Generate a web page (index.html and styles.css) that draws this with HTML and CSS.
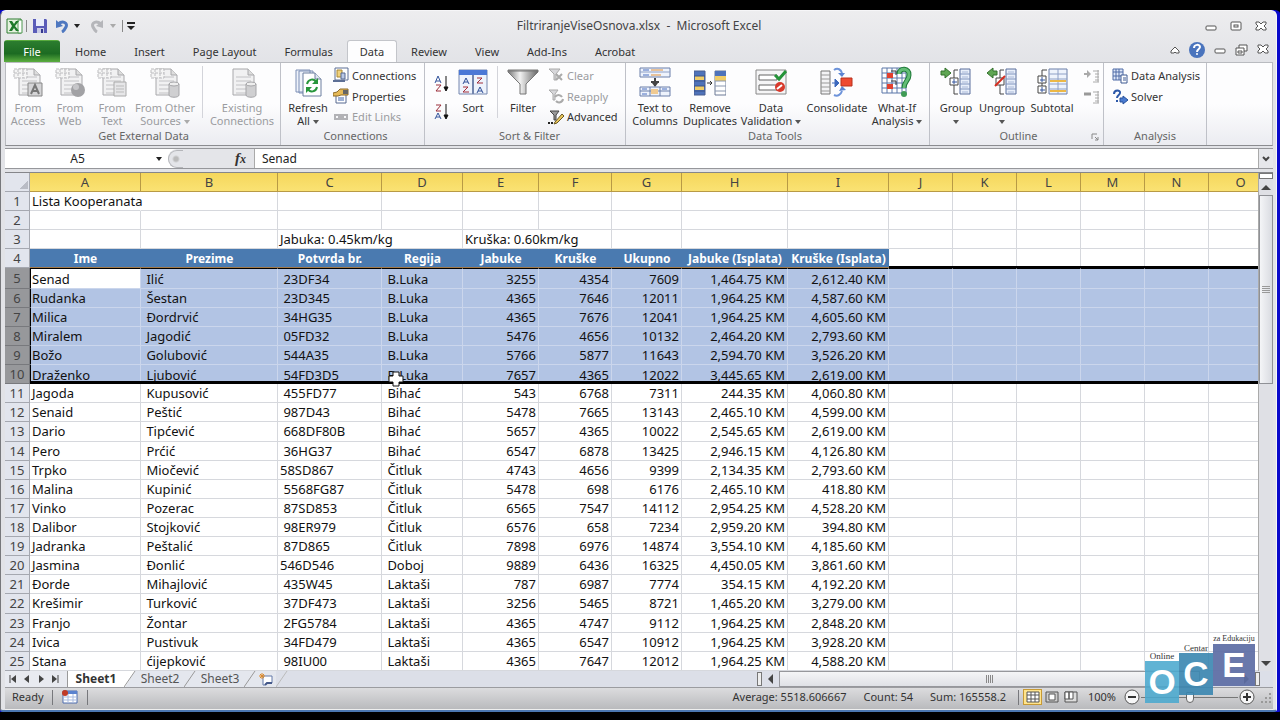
FILE: index.html
```html
<!DOCTYPE html>
<html lang="bs">
<head>
<meta charset="utf-8">
<title>FiltriranjeViseOsnova.xlsx - Microsoft Excel</title>
<link rel="stylesheet" href="styles.css">
</head>
<body>
<svg class="defs" aria-hidden="true">
  <defs>
    <linearGradient id="metal" x1="0" x2="1"><stop offset="0" stop-color="#777"/><stop offset=".4" stop-color="#f2f2f2"/><stop offset="1" stop-color="#666"/></linearGradient>
    <symbol id="sheet-gray" viewBox="0 0 32 32">
      <path d="M7 3h15l6 6v20H7z" fill="#f1f1f2" stroke="#a8a8ab"/><path d="M22 3v6h6" fill="#ddd" stroke="#a8a8ab"/>
      <path d="M10 11h15M10 15h15M10 19h15M10 23h15M10 27h15" stroke="#c2c2c5"/>
    </symbol>
    <symbol id="range-gray" viewBox="0 0 32 32"><path d="M2 3h13v9H2zM2 7h13M6 3v9M11 3v9" fill="#f5f5f5" stroke="#bcbcbf" stroke-dasharray="3 1"/></symbol>
    <symbol id="drum-gray" viewBox="0 0 32 32"><path d="M20 18v11c0 3 10 3 10 0V18" fill="#cfcfd1" stroke="#a5a5a8"/><ellipse cx="25" cy="18" rx="5" ry="2" fill="#eee" stroke="#a5a5a8"/></symbol>
    <symbol id="levels" viewBox="0 0 32 32"><path d="M20 3h10v25H20z" fill="#e9effa" stroke="#5b6f9c"/><path d="M20 8h10M20 13h10M20 18h10M20 23h10" stroke="#7f93bd"/><path d="M22 6h6M22 11h6M22 16h6M22 21h6M22 26h6" stroke="#a9b8d8"/></symbol>
  </defs>
</svg>

<div class="window">
  <header class="titlebar">
    <div class="quick">
      <svg width="18" height="18" viewBox="0 0 18 18"><path d="M2 2h14v14H2z" fill="#e5f2df" stroke="#2f7d32"/><path d="M13 3h4v13h-4z" fill="#fff" stroke="#4f9850"/><path d="M4 4h3l2 3 2-3h3l-4 5 4 5h-3l-2-3-2 3H4l3-5z" fill="#1f7a2b"/></svg>
      <i class="tick"></i>
      <button class="plain save" aria-label="Save"><svg width="16" height="16" viewBox="0 0 16 16"><path d="M1 1h13l1 1v13H1z" fill="#5a5cb8"/><path d="M4 1h8v7H4z" fill="#e9edfb"/><path d="M5 10h7v5H5z" fill="#c9cbe6"/><path d="M9 11h2v4H9z" fill="#34378d"/></svg></button>
      <button class="plain undo" aria-label="Undo"><svg width="14" height="14" viewBox="0 0 14 14"><path d="M3 5c5-4 10-1 8 3-1 2-2 4-4 5" fill="none" stroke="#4f78c0" stroke-width="3"/><path d="M1 1v8l7-2z" fill="#4f78c0"/></svg></button>
      <i class="caret"></i>
      <button class="plain redo" aria-label="Redo"><svg width="14" height="14" viewBox="0 0 14 14"><path d="M11 5C6 1 1 4 3 8c1 2 2 4 4 5" fill="none" stroke="#b5b6ba" stroke-width="3"/><path d="M13 1v8L6 7z" fill="#b5b6ba"/></svg></button>
      <i class="caret dim"></i>
      <i class="tick"></i>
      <svg width="8" height="8" viewBox="0 0 8 8"><path d="M0 1h8" stroke="#222" stroke-width="2"/><path d="M0 4h8L4 8z" fill="#222"/></svg>
    </div>
    <h1>FiltriranjeViseOsnova.xlsx &nbsp;- &nbsp;Microsoft Excel</h1>
    <div class="sysbtns">
      <button class="plain" aria-label="Minimize"><svg width="12" height="12" viewBox="0 0 12 12"><rect x="1" y="6" width="10" height="4" rx="1" fill="#fff" stroke="#555"/></svg></button>
      <button class="plain" aria-label="Maximize"><svg width="12" height="12" viewBox="0 0 12 12"><rect x="1" y="2" width="10" height="8" rx="1" fill="#fff" stroke="#555"/><rect x="4" y="5" width="4" height="2" fill="#fff" stroke="#555"/></svg></button>
      <button class="plain" aria-label="Close"><svg width="12" height="12" viewBox="0 0 12 12"><path d="M1 2h3l2 2 2-2h3v2L9 6l2 2v2H8L6 8l-2 2H1V8l2-2-2-2z" fill="#fff" stroke="#555"/></svg></button>
    </div>
  </header>

  <nav class="tabs">
    <button class="tab file">File</button>
    <button class="tab">Home</button>
    <button class="tab">Insert</button>
    <button class="tab">Page Layout</button>
    <button class="tab">Formulas</button>
    <button class="tab active">Data</button>
    <button class="tab">Review</button>
    <button class="tab">View</button>
    <button class="tab">Add-Ins</button>
    <button class="tab">Acrobat</button>
    <div class="bookbtns">
      <button class="plain" aria-label="Collapse ribbon"><svg width="10" height="8" viewBox="0 0 10 8"><path d="M1 5l4-4 4 4v2H6L5 6 4 7H1z" fill="#fff" stroke="#555"/></svg></button>
      <button class="plain" aria-label="Help"><svg width="16" height="16" viewBox="0 0 16 16"><circle cx="8" cy="8" r="8" fill="#4a74bd"/><path d="M5 6c0-4 6-4 6-1 0 2-3 2-3 5" fill="none" stroke="#fff" stroke-width="2"/><circle cx="8" cy="12" r="1" fill="#fff"/></svg></button>
      <button class="plain" aria-label="Minimize workbook"><svg width="12" height="12" viewBox="0 0 12 12"><rect x="1" y="5" width="10" height="4" rx="1" fill="#fff" stroke="#555"/></svg></button>
      <button class="plain" aria-label="Restore workbook"><svg width="13" height="12" viewBox="0 0 13 12"><path d="M4 1h8v6H4z" fill="#fff" stroke="#555"/><path d="M1 4h8v7H1z" fill="#fff" stroke="#555"/><path d="M3 7h4v2H3z" fill="#fff" stroke="#555"/></svg></button>
      <button class="plain" aria-label="Close workbook"><svg width="12" height="12" viewBox="0 0 12 12"><path d="M1 1h3l2 2 2-2h3v2L9 5l2 2v2H8L6 7 4 9H1V7l2-2-2-2z" fill="#fff" stroke="#555"/></svg></button>
    </div>
  </nav>

  <section class="ribbon">
    <div class="group g-external">
      <div class="tools">
        <button class="big w42 off"><svg width="32" height="32"><use href="#sheet-gray"/><use href="#range-gray"/><path d="M16 17h14v13H16z" fill="#d4d4d6" stroke="#888"/><path d="M19 28l4-9 4 9M20 25h6" fill="none" stroke="#777" stroke-width="2"/></svg>From<br>Access</button>
        <button class="big w42 off"><svg width="32" height="32"><use href="#sheet-gray"/><use href="#range-gray"/><circle cx="24" cy="24" r="7" fill="#a2a2a5"/><circle cx="22" cy="21" r="3" fill="#c6c6c9"/></svg>From<br>Web</button>
        <button class="big w42 off"><svg width="32" height="32"><use href="#sheet-gray"/><use href="#range-gray"/><path d="M18 16h12v14H18z" fill="#e6e6e8" stroke="#aaa"/><path d="M20 20h8M20 23h8M20 26h8" stroke="#bbb"/></svg>From<br>Text</button>
        <button class="big w64 off"><svg width="32" height="32"><use href="#sheet-gray"/><use href="#range-gray"/><use href="#drum-gray"/></svg>From Other<br>Sources <i class="caret dim"></i></button>
        <i class="rule"></i>
        <button class="big w70 off"><svg width="32" height="32"><use href="#sheet-gray"/><use href="#drum-gray"/></svg>Existing<br>Connections</button>
      </div>
      <div class="caption">Get External Data</div>
    </div>

    <div class="group g-connections">
      <div class="tools">
        <button class="big w42"><svg width="32" height="32" viewBox="0 0 32 32"><path d="M4 4h14v22H4zM7 5h14v22H7z" fill="#eef2fa" stroke="#7d8fb5"/><path d="M11 7h12l6 6v17H11z" fill="#fff" stroke="#6d7f9f"/><path d="M23 7v6h6" fill="#dfe5f0" stroke="#6d7f9f"/><path d="M15 18c1-5 7-6 9-2" stroke="#27963b" stroke-width="2" fill="none"/><path d="M26 12v6h-6z" fill="#27963b"/><path d="M25 21c-1 5-7 6-9 2" stroke="#27963b" stroke-width="2" fill="none"/><path d="M14 27v-6h6z" fill="#27963b"/></svg>Refresh<br>All <i class="caret soft"></i></button>
        <div class="stack">
          <button class="small"><svg width="16" height="16" viewBox="0 0 16 16"><path d="M2 1h13v12H2z" fill="#fff" stroke="#5d6f95"/><path d="M4 3h5v7H4z" fill="#f1d27c" stroke="#a98835"/><path d="M8 6h4v6H8z" fill="#b9c8e6" stroke="#56698f"/><path d="M0 14h12" stroke="#5d6f95" stroke-width="2"/></svg>Connections</button>
          <button class="small"><svg width="16" height="16" viewBox="0 0 16 16"><path d="M3 6h10v9H3z" fill="#fff" stroke="#56698f"/><path d="M5 10h6M5 12h6" stroke="#3e62a8"/><path d="M4 4l3-3h8v6H8L5 8H0V5z" fill="#e6b956" stroke="#8c6b2b"/><path d="M10 2h5v4h-5z" fill="#666"/></svg>Properties</button>
          <button class="small off"><svg width="16" height="16" viewBox="0 0 16 16"><path d="M2 6h5v4H2zM9 6h5v4H9zM5 8h6" fill="none" stroke="#b2b2b6" stroke-width="2"/></svg>Edit Links</button>
        </div>
      </div>
      <div class="caption">Connections</div>
    </div>

    <div class="group g-sort">
      <div class="tools">
        <div class="stack az">
          <button class="small" aria-label="Sort A to Z"><svg width="16" height="18" viewBox="0 0 16 18"><path d="M1 8l3-7 3 7M2 6h4" fill="none" stroke="#34559c"/><path d="M2 10h5l-5 6h5" fill="none" stroke="#9b2f3a"/><path d="M12 1v14M10 12l2 4 2-4z" fill="#111" stroke="#111"/></svg></button>
          <button class="small" aria-label="Sort Z to A"><svg width="16" height="18" viewBox="0 0 16 18"><path d="M2 2h5L2 8h5" fill="none" stroke="#9b2f3a"/><path d="M1 16l3-6 3 6M2 14h4" fill="none" stroke="#34559c"/><path d="M12 1v14M10 12l2 4 2-4z" fill="#111" stroke="#111"/></svg></button>
        </div>
        <button class="big w38"><svg width="32" height="32" viewBox="0 0 32 32"><path d="M2 4h28v24H2z" fill="#eef3fc" stroke="#7486ae"/><path d="M2 4h28v5H2z" fill="#4b78d6"/><path d="M16 9v19" stroke="#7486ae" stroke-width="2"/><path d="M6 18l3-6 3 6M7 16h4M20 27l3-6 3 6M21 25h4" fill="none" stroke="#2f4e96"/><path d="M6 21h5l-5 5h6M20 12h5l-5 5h6" fill="none" stroke="#a22f3b"/></svg>Sort</button>
        <i class="rule"></i>
        <button class="big w42"><svg width="32" height="32" viewBox="0 0 32 32"><path d="M1 4h30v2L19 18v10h-6V18L1 6z" fill="url(#metal)" stroke="#777"/><path d="M2 5h28" stroke="#777"/></svg>Filter</button>
        <div class="stack">
          <button class="small off"><svg width="16" height="16" viewBox="0 0 16 16"><path d="M1 2h11L8 7v6H6V7z" fill="#d7d7da" stroke="#aaa"/><path d="M8 7l6 6M14 7l-6 6" stroke="#aaa" stroke-width="2"/></svg>Clear</button>
          <button class="small off"><svg width="16" height="16" viewBox="0 0 16 16"><path d="M1 2h9L7 6v6H5V6z" fill="#d7d7da" stroke="#aaa"/><path d="M7 9a4 4 0 0 1 7 0M15 11a4 4 0 0 1-7 2" stroke="#aaa" stroke-width="2" fill="none"/></svg>Reapply</button>
          <button class="small"><svg width="16" height="16" viewBox="0 0 16 16"><path d="M2 2h9L8 6v5H6V6z" fill="#999" stroke="#444"/><path d="M7 13l7-8 2 2-7 7-3 1z" fill="#e9c65c" stroke="#6b5a25"/><path d="M0 14h2M3 14h2" stroke="#222" stroke-width="2"/></svg>Advanced</button>
        </div>
      </div>
      <div class="caption">Sort &amp; Filter</div>
    </div>

    <div class="group g-data">
      <div class="tools">
        <button class="big w52"><svg width="32" height="32" viewBox="0 0 32 32"><path d="M1 2h30v9H1z" fill="#eef3fc" stroke="#6a7ea9"/><path d="M1 6h30" stroke="#8ea0c6"/><path d="M4 4h6M4 9h6" stroke="#4a6fc0"/><path d="M12 4h12M12 9h10" stroke="#e0913b"/><path d="M16 12v8M12 16h8" stroke="#444" stroke-width="2"/><path d="M13 17h6l-3 4z" fill="#444"/><path d="M1 21h30v9H1zM11 21v9M21 21v9M1 25h30" fill="#eef3fc" stroke="#6a7ea9"/><path d="M3 23h5M23 23h5M3 28h5" stroke="#4a6fc0"/><path d="M12 23h7v5h-7z" fill="#f0ca92"/></svg>Text to<br>Columns</button>
        <button class="big w58"><svg width="32" height="32" viewBox="0 0 32 32"><path d="M0 5h11v24H0z" fill="#4f73ba" stroke="#4a5f90"/><path d="M1 10h9v4H1zM1 20h9v4H1z" fill="#f1cd67"/><path d="M0 10h11M0 15h11M0 20h11M0 25h11" stroke="#3b5288"/><path d="M21 5h11v24H21z" fill="#fff" stroke="#6b7995"/><path d="M21 5h11v5H21z" fill="#4f73ba"/><path d="M21 10h11v5H21z" fill="#f1cd67"/><path d="M21 15h11M21 20h11M21 25h11" stroke="#8996ae"/><path d="M13 17h5M16 15l2 2-2 2" fill="none" stroke="#333"/></svg>Remove<br>Duplicates</button>
        <button class="big w64"><svg width="32" height="32" viewBox="0 0 32 32"><path d="M1 4h30v24H1z" fill="#f5f5f6" stroke="#888"/><path d="M4 9h18v5H4zM4 19h18v5H4z" fill="#fff" stroke="#666"/><path d="M20 9l4 4 7-8" stroke="#249338" stroke-width="3" fill="none"/><circle cx="25" cy="21" r="5" fill="#d83a2c"/><path d="M22 23l5-4" stroke="#fff" stroke-width="2"/></svg>Data<br>Validation <i class="caret soft"></i></button>
        <button class="big w68"><svg width="34" height="32" viewBox="0 0 34 32"><path d="M1 5h9v23H1z" fill="#f3f3f5" stroke="#777"/><path d="M1 9h9M1 13h9M1 17h9M1 21h9M1 25h9" stroke="#999"/><path d="M21 12h11v8H21z" fill="#ee4a32" stroke="#b8301c"/><path d="M12 17h5M15 13l4 4-4 4z" stroke="#3c69bd" fill="#3c69bd"/><path d="M14 4c4-3 7 0 8 3M14 29c4 2 7-1 8-4" stroke="#6d93da" stroke-width="2" fill="none"/><path d="M18 7h7l-3 4zM19 25l7-1-4-4z" fill="#5b84d2"/></svg>Consolidate</button>
        <button class="big w52"><svg width="32" height="32" viewBox="0 0 32 32"><path d="M1 2h24v25H1zM1 7h24M1 12h24M1 17h24M1 22h24M6 2v25M11 2v25M16 2v25M21 2v25" fill="#fff" stroke="#5b76a8"/><path d="M6 7h6v5H6zM6 18h6v5H6z" fill="#e2402e"/><path d="M10 5h5v4M10 15h5v4" fill="none" stroke="#333"/><path d="M18 8c0-7 11-6 10 1 0 6-5 6-5 13" fill="none" stroke="#1f7a39" stroke-width="5"/><path d="M18 8c0-7 11-6 10 1 0 6-5 6-5 13" fill="none" stroke="#63bd76" stroke-width="3"/><circle cx="23" cy="28" r="3" fill="#3f9b55"/></svg>What-If<br>Analysis <i class="caret soft"></i></button>
      </div>
      <div class="caption">Data Tools</div>
    </div>

    <div class="group g-outline">
      <div class="tools">
        <button class="big w44"><svg width="32" height="32" viewBox="0 0 32 32"><use href="#levels"/><path d="M18 4h-4v24h4" fill="none" stroke="#444"/><path d="M10 12h8v7h-8z" fill="#fff" stroke="#444"/><path d="M12 16h5M14 13v5" stroke="#34559c"/><path d="M1 5h4V2l6 5-6 5V9H1z" fill="#5fa653" stroke="#33712c"/></svg>Group<br><i class="caret soft"></i></button>
        <button class="big w48"><svg width="32" height="32" viewBox="0 0 32 32"><use href="#levels"/><path d="M18 4h-4v24h4" fill="none" stroke="#444"/><path d="M10 12h8v7h-8z" fill="#fff" stroke="#444"/><path d="M9 20L19 10" stroke="#d62d20" stroke-width="2"/><path d="M11 5H7V2L1 7l6 5V9h4z" fill="#5fa653" stroke="#33712c"/></svg>Ungroup<br><i class="caret soft"></i></button>
        <button class="big w52"><svg width="32" height="32" viewBox="0 0 32 32"><path d="M13 3h18v25H13z" fill="#eef3fc" stroke="#6a7ea9"/><path d="M13 8h18M13 13h18M13 18h18M13 23h18M22 3v25" stroke="#8ea0c6"/><path d="M14 15h16M14 25h16" stroke="#ecb847" stroke-width="2"/><path d="M11 4H6v6M6 17v3" fill="none" stroke="#444"/><path d="M2 10h8v7H2zM2 20h8v7H2z" fill="#fff" stroke="#444"/><path d="M4 14h5M6 11v5M4 24h5M6 21v5" stroke="#34559c"/></svg>Subtotal</button>
        <div class="stack detail">
          <button class="small" aria-label="Show Detail"><svg width="16" height="16" viewBox="0 0 16 16"><path d="M0 5h3V2l4 4-4 4V7H0z" fill="#aaa"/><path d="M9 3h6M11 6h4M11 9h4M11 12h4M9 14h6M14 2v12" stroke="#aaa"/></svg></button>
          <button class="small" aria-label="Hide Detail"><svg width="16" height="16" viewBox="0 0 16 16"><path d="M0 5h7" stroke="#999" stroke-width="3"/><path d="M9 3h6M11 6h4M11 9h4M11 12h4M9 14h6M14 2v12" stroke="#aaa"/></svg></button>
        </div>
      </div>
      <div class="caption">Outline</div>
      <svg class="launcher" width="8" height="8" viewBox="0 0 8 8"><path d="M1 6V1h5M4 4l3 3M7 4v3H4" fill="none" stroke="#888"/></svg>
    </div>

    <div class="group g-analysis">
      <div class="tools">
        <div class="stack">
          <button class="small"><svg width="16" height="16" viewBox="0 0 16 16"><path d="M1 1h10v11H1zM1 4h10M4 1v11M7 1v11M1 8h10" fill="#dfe8f8" stroke="#4f6ba6"/><path d="M9 7h6v8H9z" fill="#fff" stroke="#3f5a92"/><path d="M11 10h3M11 12h3" stroke="#3f5a92"/></svg>Data Analysis</button>
          <button class="small"><svg width="16" height="16" viewBox="0 0 16 16"><path d="M2 5c0-5 7-4 6-1 0 2-3 2-3 5M5 11v2" fill="none" stroke="#2c58a8" stroke-width="2"/><path d="M8 9h3V7l5 4-5 4v-2H8z" fill="#4a7bd0" stroke="#27509b"/></svg>Solver</button>
        </div>
      </div>
      <div class="caption">Analysis</div>
    </div>
  </section>

  <div class="formulabar">
    <input class="namebox" aria-label="Name box" value="A5">
    <button class="plain namearrow" aria-label="Names"><i class="caret"></i></button>
    <div class="fxarea"><i class="knob"></i><span class="fx">f<small>x</small></span></div>
    <input class="formula" aria-label="Formula" value="Senad">
    <button class="plain expand" aria-label="Expand formula bar"><svg width="8" height="6" viewBox="0 0 8 6"><path d="M1 1l3 3 3-3" fill="none" stroke="#444" stroke-width="2"/></svg></button>
  </div>

  <main class="work">
    <div class="gridwrap">
      <table class="grid">
        <colgroup><col class="c-row"><col class="c-a"><col class="c-b"><col class="c-c"><col class="c-d"><col class="c-e"><col class="c-f"><col class="c-g"><col class="c-h"><col class="c-i"><col span="6" class="c-rest"></colgroup>
        <thead></thead>
        <tbody></tbody>
      </table>
      <svg class="cursor" width="16" height="16" viewBox="0 0 16 16"><path d="M5 1h6v4h4v6h-4v4H5v-4H1V5h4z" fill="#fff" stroke="#111"/></svg>
    </div>
    <div class="vscroll">
      <i class="split"></i>
      <button class="plain arrow" aria-label="Scroll up"><i class="up"></i></button>
      <div class="vtrack"><div class="vthumb"><i class="vgrip"></i></div></div>
      <button class="plain arrow" aria-label="Scroll down"><i class="down"></i></button>
    </div>
  </main>

  <div class="sheetbar">
    <div class="sheetnav">
      <button class="plain" aria-label="First sheet"><svg width="8" height="8" viewBox="0 0 8 8"><path d="M1 0v8" stroke="#444" stroke-width="1"/><path d="M7 0v8L2 4z" fill="#444"/></svg></button>
      <button class="plain" aria-label="Previous sheet"><svg width="8" height="8" viewBox="0 0 8 8"><path d="M6 0v8L1 4z" fill="#444"/></svg></button>
      <button class="plain" aria-label="Next sheet"><svg width="8" height="8" viewBox="0 0 8 8"><path d="M2 0v8l5-4z" fill="#444"/></svg></button>
      <button class="plain" aria-label="Last sheet"><svg width="8" height="8" viewBox="0 0 8 8"><path d="M7 0v8" stroke="#444"/><path d="M1 0v8l5-4z" fill="#444"/></svg></button>
    </div>
    <button class="sheet on">Sheet1</button>
    <svg class="slant" width="12" height="16" viewBox="0 0 12 16"><path d="M0 0h11L1 16H0z" fill="#fff"/><path d="M0 16L11 0" stroke="#999" fill="none"/></svg>
    <button class="sheet">Sheet2</button>
    <svg class="slant" width="12" height="16" viewBox="0 0 12 16"><path d="M0 16L11 0" stroke="#999" fill="none"/></svg>
    <button class="sheet">Sheet3</button>
    <svg class="slant" width="12" height="16" viewBox="0 0 12 16"><path d="M0 16L11 0" stroke="#999" fill="none"/></svg>
    <button class="plain newsheet" aria-label="Insert worksheet"><svg width="16" height="14" viewBox="0 0 16 14"><path d="M5 4h9v7H9l-2 2H5z" fill="#fff" stroke="#6379a8"/><path d="M7 13l2-2h5" stroke="#45598a" stroke-width="2" fill="none"/><path d="M4 1v6M1 4h6M2 2l4 4M6 2L2 6" stroke="#dd8a2a"/></svg></button>
    <svg class="slant" width="12" height="16" viewBox="0 0 12 16"><path d="M0 16L11 0" stroke="#bbb" fill="none"/></svg>
    <div class="hscroll">
      <i class="hsplit"></i>
      <button class="plain harrow" aria-label="Scroll left"><i class="left"></i></button>
      <div class="hthumb"><i class="hgrip"></i></div>
      <button class="plain harrow" aria-label="Scroll right"><i class="right"></i></button>
      <i class="hsplit"></i>
    </div>
  </div>

  <footer class="status">
    <span class="ready">Ready</span>
    <i class="sep"></i>
    <button class="plain macro" aria-label="Record macro"><svg width="16" height="14" viewBox="0 0 16 14"><path d="M1 1h14v12H1z" fill="#fff" stroke="#4d6cae"/><path d="M1 1h14v3H1z" fill="#5b83cf"/><path d="M1 7h14M1 10h14M6 4v9M11 4v9" stroke="#a9bbdf"/><circle cx="3" cy="3" r="3" fill="#c03a26"/></svg></button>
    <i class="sep"></i>
    <div class="stats"><span>Average: 5518.606667</span><span>Count: 54</span><span>Sum: 165558.2</span></div>
    <i class="sep"></i>
    <div class="views">
      <button class="plain view on" aria-label="Normal view"><svg width="14" height="12" viewBox="0 0 14 12"><path d="M1 1h12v10H1zM1 4h12M1 8h12M5 1v10M9 1v10" fill="#fff" stroke="#555"/></svg></button>
      <button class="plain view" aria-label="Page layout view"><svg width="14" height="12" viewBox="0 0 14 12"><path d="M1 1h12v10H1z" fill="#ccc" stroke="#555"/><path d="M4 3h6v6H4z" fill="#fff" stroke="#555"/></svg></button>
      <button class="plain view" aria-label="Page break view"><svg width="14" height="12" viewBox="0 0 14 12"><path d="M1 1h12v10H1z" fill="#ddd" stroke="#555"/><path d="M1 1h4v7H1zM5 1h4v7H5z" fill="#fff" stroke="#555"/></svg></button>
    </div>
    <span class="percent">100%</span>
    <button class="plain zoom" aria-label="Zoom out"><svg width="16" height="16" viewBox="0 0 16 16"><circle cx="8" cy="8" r="7" fill="#f6f6f7" stroke="#555"/><path d="M4 8h8" stroke="#333" stroke-width="2"/></svg></button>
    <input class="slider" type="range" min="0" max="100" value="50" aria-label="Zoom">
    <button class="plain zoom" aria-label="Zoom in"><svg width="16" height="16" viewBox="0 0 16 16"><circle cx="8" cy="8" r="7" fill="#f6f6f7" stroke="#555"/><path d="M4 8h8M8 4v8" stroke="#333" stroke-width="2"/></svg></button>
    <svg class="resize" width="14" height="14" viewBox="0 0 14 14"><path d="M10 2h2M6 6h2M10 6h2M2 10h2M6 10h2M10 10h2" stroke="#999" stroke-width="2"/></svg>
  </footer>
</div>

<div class="logo">
  <div class="tile t-o"><span>Online</span><b>O</b></div>
  <div class="tile t-c"><span>Centar</span><b>C</b></div>
  <div class="tile t-e"><span>za Edukaciju</span><b>E</b></div>
</div>
<script src="sheet.js"></script>
</body>
</html>
```
FILE: styles.css
```css
* { box-sizing: border-box; }
body {
  margin: 0;
  height: 100vh;
  padding: 10px 0 8px;
  background: #000;
  font-family: "Noto Sans", "Open Sans", sans-serif;
  font-size: 11px;
  color: #333;
  overflow: hidden;
  position: relative;
}
button, input { font: inherit; color: inherit; margin: 0; }
button { border: 0; background: none; padding: 0; white-space: nowrap; }
svg { display: block; flex: none; }
.defs { position: absolute; width: 0; height: 0; }
.plain { display: flex; align-items: center; justify-content: center; }

.window {
  height: 100%;
  display: flex;
  flex-direction: column;
  margin-right: 3px;
  padding: 0 3px 0 4px;
  background: #d9dade;
  border: 1px solid #f6f6f8;
  border-left-color: #77787c;
  border-bottom: 2px solid #4b77b0;
  border-radius: 6px 6px 3px 3px;
  box-shadow: 4px 0 0 #0a0acb, -4px 0 0 #0a0acb;
  background-image: linear-gradient(#ededef, #e2e3e7 52px);
  background-repeat: no-repeat;
}

.titlebar { flex: none; height: 29px; display: grid; grid-template-columns: 1fr auto 1fr; align-items: center; }
.titlebar h1 { margin: 0; font-size: 12px; line-height: 16px; font-weight: 400; color: #444; }
.quick { display: flex; align-items: center; }
.tick { width: 1px; height: 12px; margin: 0 5px 0 3px; background: #888; }
.undo { margin: 0 5px 0 7px; }
.redo { margin: 0 6px 0 10px; }
.quick .caret + .tick { margin: 0 4px 0 6px; }
.caret { display: inline-block; border: 3px solid transparent; border-top: 4px solid #222; border-bottom: 0; vertical-align: middle; }
.caret.dim { border-top-color: #aaa; }
.caret.soft { border-top-color: #555; }
.sysbtns { display: flex; gap: 13px; justify-content: flex-end; padding-right: 6px; }

.tabs { flex: none; height: 22px; display: flex; align-items: stretch; }
.tab { padding: 0 13px; line-height: 20px; border: 1px solid transparent; border-bottom: 0; }
.tab.file { width: 56px; margin: 0 1px 0 -1px; color: #fff; border-radius: 3px 3px 0 0; background: linear-gradient(#2c7d2f, #1c6b22 60%, #5cae3f); }
.tab.active { padding: 0 12px; background: #fdfdfe; border-color: #c3c5ca; border-radius: 3px 3px 0 0; }
.bookbtns { margin-left: auto; display: flex; align-items: center; gap: 9px; padding: 0 4px 3px 0; }

.ribbon { flex: none; height: 84px; display: flex; background: linear-gradient(#fdfdfe 50%, #ebecf1); border: 1px solid #b9bbc0; border-bottom-color: #8b8c90; }
.group { position: relative; flex: none; display: flex; flex-direction: column; border-right: 1px solid #bfc1c8; }
.g-external { width: 275px; padding-left: 1px; }
.g-connections { width: 144px; padding-left: 6px; }
.g-sort { width: 201px; padding-left: 9px; }
.g-data { width: 304px; padding-left: 3px; }
.g-outline { width: 174px; padding-left: 4px; }
.g-analysis { width: 103px; padding-left: 8px; }
.tools { flex: 1; display: flex; min-height: 0; padding-top: 3px; }
.caption { height: 18px; line-height: 18px; text-align: center; color: #666; white-space: nowrap; }
.g-analysis .caption, .g-data .caption { margin-left: -8px; }
.big { display: block; line-height: 13px; text-align: center; flex: none; align-self: flex-start; }
.big svg { margin: 0 auto 3px; }
.off { color: #9b9ca0; }
.w38 { width: 38px; } .w42 { width: 42px; } .w44 { width: 44px; } .w48 { width: 48px; }
.w52 { width: 52px; } .w58 { width: 58px; } .w64 { width: 64px; } .w68 { width: 68px; } .w70 { width: 70px; }
.rule { width: 1px; height: 52px; margin: 0 4px 0 5px; background: #d3d4da; flex: none; }
.stack { display: flex; flex-direction: column; margin: -1px 0 0 4px; }
.small { display: flex; align-items: center; gap: 3px; height: 21px; text-align: left; }
.az { margin: 4px 4px 0 0; }
.az .small { height: 28px; }
.detail { margin-left: 6px; }
.g-analysis .stack { margin-left: 0; }
.launcher { position: absolute; right: 4px; bottom: 4px; }

.formulabar { flex: none; height: 21px; margin-top: 2px; display: flex; border: solid #96979b; border-width: 1px 0; background: #fff; }
.formulabar input { border: 0; outline: 0; background: #fff; padding: 0; font-size: 12px; color: #222; }
.namebox { width: 145px; text-align: center; }
.namearrow { width: 18px; }
.fxarea { width: 87px; background: #e4e5e9; border-right: 1px solid #aaa; border-radius: 9px 0 0 9px; display: flex; align-items: center; justify-content: space-between; padding-right: 8px; }
.knob { width: 15px; height: 18px; border: 1px solid #b5b6ba; border-right: 0; border-radius: 9px 0 0 9px; background: radial-gradient(circle, #bbb 2px, #e4e5e9 4px); }
.fx { font: italic bold 15px "Liberation Serif", serif; }
.fx small { font-size: 12px; }
.formula { flex: 1; min-width: 0; }
.formulabar .formula { padding-left: 7px; }
.expand { width: 15px; background: #e6e7eb; border-left: 1px solid #aaa; }

.work { flex: 1; min-height: 0; margin-top: 3px; display: flex; border-top: 1px solid #85868a; }
.gridwrap { flex: 1; min-width: 0; overflow: hidden; position: relative; background: #fff; }
.grid { table-layout: fixed; width: 1268px; height: 100%; border-collapse: separate; border-spacing: 0; font-size: 13px; line-height: 16px; color: #111; }
.c-row { width: 25px; } .c-a { width: 111px; } .c-b { width: 137px; } .c-c { width: 104px; } .c-d { width: 81px; }
.c-e { width: 76px; } .c-f { width: 73px; } .c-g { width: 70px; } .c-h { width: 106px; } .c-i { width: 101px; } .c-rest { width: 64px; }
.grid th, .grid td { padding: 0 2px; border-right: 1px solid #d6d8dd; border-bottom: 1px solid #d6d8dd; white-space: pre; font-weight: 400; text-align: left; }
.grid th { text-align: center; color: #444; }
.grid thead th { height: 19px; background: linear-gradient(#f5d75c, #fae273); border-color: #b89a45; }
.grid thead th:first-child { background: linear-gradient(135deg, transparent 50%, #b9bcc5 50%) 14px 7px / 9px 9px no-repeat #e2e5ed; border-color: #a5a8b0; }
.grid tbody th { background: #e2e5ed; border-color: #a5a8b0; padding: 0; }
.grid td.num { text-align: right; }
.grid .title td, .grid .last td { border-bottom: 0; position: relative; }
.grid .title td::after, .grid .last td::after { content: ""; position: absolute; left: 0; right: -1px; bottom: 0; height: 3px; background: #000; }
.grid .title td::after { height: 2px; }
.grid .title td.fill { background: #4a7ab0; color: #fff; font-size: 12px; font-weight: 700; text-align: center; padding: 0; border-right: 0; }
.grid .title td.fill::after { right: 0; height: 1px; background: #a37a4a; }
.grid .sel td { background: #b2c4e4; border-color: #cbd6ec; }
.grid .sel th { background: #97989b; border-color: #78797d; }
.grid .first td { border-top: 1px solid #000; }
.grid .first td:nth-child(2) { background: #fff; }
.grid .sel td:nth-child(2) { border-left: 1px solid #000; padding-left: 1px; }
.grid .over { border-right-color: transparent; overflow: visible; }
.cursor { position: absolute; left: 383px; top: 198px; }

.vscroll { width: 15px; flex: none; display: flex; flex-direction: column; background: #dfe0e5; border-left: 1px solid #aaa; }
.split { height: 6px; background: #fff; border: 1px solid #777; }
.arrow { height: 16px; }
.vtrack { flex: 1; }
.vthumb { height: 41%; display: flex; align-items: center; justify-content: center; background: linear-gradient(90deg, #f4f5f7, #d9dbe1); border: 1px solid #8f9196; }
.vgrip { width: 8px; height: 7px; background: repeating-linear-gradient(#999 0 1px, transparent 1px 2px); }
.up { border: 5px solid transparent; border-top: 0; border-bottom: 5px solid #444; }
.down { border: 5px solid transparent; border-bottom: 0; border-top: 5px solid #444; }
.left { border: 5px solid transparent; border-left: 0; border-right: 5px solid #444; }
.right { border: 5px solid transparent; border-right: 0; border-left: 5px solid #444; }

.sheetbar { flex: none; height: 17px; display: flex; background: #dcdfe8; border-bottom: 1px solid #9b9ca0; }
.sheetnav { display: flex; gap: 6px; width: 63px; padding-left: 4px; align-items: center; border-right: 1px solid #999; background: #e8eaf0; }
.sheet { width: 48px; line-height: 16px; font-size: 12px; color: #555; background: #e4e7ee; }
.sheet.on { width: 56px; font-weight: 700; color: #333; background: #fff; }
.slant { background: #e4e7ee; }
.newsheet { width: 20px; background: #e4e7ee; }
.newsheet + .slant { background: none; }
.hscroll { width: 503px; margin-left: auto; margin-right: 13px; display: flex; }
.hsplit { width: 5px; margin: 1px 0; background: #eee; border: 1px solid #777; }
.harrow { width: 17px; }
.hthumb { flex: 1; margin-right: 38px; display: flex; align-items: center; justify-content: center; background: linear-gradient(#f4f5f7, #dfe1e6); border: 1px solid #96979c; }
.hgrip { width: 8px; height: 8px; background: repeating-linear-gradient(90deg, #888 0 1px, transparent 1px 2px); }

.status { flex: none; height: 22px; display: flex; align-items: center; padding-left: 7px; background: linear-gradient(#dcdcde, #b9babd); border-bottom: 1px solid #eee; line-height: 16px; padding-bottom: 3px; }
.sep { width: 1px; height: 15px; background: #77787c; }
.ready { width: 40px; }
.macro { width: 34px; }
.stats { margin-left: auto; display: flex; gap: 17px; padding-right: 12px; }
.views { display: flex; margin-left: 4px; gap: 1px; }
.view { width: 18px; height: 16px; }
.view.on { width: 19px; background: #ffe48c; border: 1px solid #c79a35; }
.percent { width: 44px; text-align: center; }
.slider { appearance: none; width: 97px; height: 16px; margin: 0 1px; background: linear-gradient(#777, #777) center / 100% 1px no-repeat; }
.slider::-webkit-slider-thumb { appearance: none; width: 8px; height: 11px; background: #f6f6f7; border: 1px solid #666; border-radius: 1px 1px 4px 4px; }
.resize { margin-left: 4px; align-self: flex-end; }

.logo { position: absolute; right: 25px; bottom: 17px; display: flex; align-items: flex-end; font-family: "Liberation Serif", serif; font-size: 9px; line-height: 10px; color: #333; }
.tile { display: flex; flex-direction: column; align-items: center; width: 34px; white-space: nowrap; }
.tile b { width: 100%; height: 42px; font: bold 35px/42px "Liberation Sans", sans-serif; color: #fff; text-align: center; }
.t-o b { background: rgba(74, 168, 206, .88); }
.t-c { margin-bottom: 8px; }
.t-c b { background: rgba(58, 134, 176, .9); }
.t-e { width: 42px; margin-bottom: 17px; font-size: 8px; }
.t-e b { background: rgba(92, 108, 164, .92); }
```
FILE: sheet.js
```js
const letters = "ABCDEFGHIJKLMNO".split("");
const rows = [
  ["Lista Kooperanata"],
  [],
  ["", "", "Jabuka: 0.45km/kg", "", "Kruška: 0.60km/kg"],
  ["Ime", "Prezime", "Potvrda br.", "Regija", "Jabuke", "Kruške", "Ukupno", "Jabuke (Isplata)", "Kruške (Isplata)"],
  ["Senad", " Ilić", " 23DF34", " B.Luka", "3255", "4354", "7609", "1,464.75 KM", "2,612.40 KM"],
  ["Rudanka", " Šestan", " 23D345", " B.Luka", "4365", "7646", "12011", "1,964.25 KM", "4,587.60 KM"],
  ["Milica", " Đordrvić", " 34HG35", " B.Luka", "4365", "7676", "12041", "1,964.25 KM", "4,605.60 KM"],
  ["Miralem", " Jagodić", " 05FD32", " B.Luka", "5476", "4656", "10132", "2,464.20 KM", "2,793.60 KM"],
  ["Božo", " Golubović", " 544A35", " B.Luka", "5766", "5877", "11643", "2,594.70 KM", "3,526.20 KM"],
  ["Draženko", " Ljubović", " 54FD3D5", " B.Luka", "7657", "4365", "12022", "3,445.65 KM", "2,619.00 KM"],
  ["Jagoda", " Kupusović", " 455FD77", " Bihać", "543", "6768", "7311", "244.35 KM", "4,060.80 KM"],
  ["Senaid", " Peštić", " 987D43", " Bihać", "5478", "7665", "13143", "2,465.10 KM", "4,599.00 KM"],
  ["Dario", " Tipćević", " 668DF80B", " Bihać", "5657", "4365", "10022", "2,545.65 KM", "2,619.00 KM"],
  ["Pero", " Prćić", " 36HG37", " Bihać", "6547", "6878", "13425", "2,946.15 KM", "4,126.80 KM"],
  ["Trpko", " Miočević", "58SD867", " Čitluk", "4743", "4656", "9399", "2,134.35 KM", "2,793.60 KM"],
  ["Malina", " Kupinić", " 5568FG87", " Čitluk", "5478", "698", "6176", "2,465.10 KM", "418.80 KM"],
  ["Vinko", " Pozerac", " 87SD853", " Čitluk", "6565", "7547", "14112", "2,954.25 KM", "4,528.20 KM"],
  ["Dalibor", " Stojković", " 98ER979", " Čitluk", "6576", "658", "7234", "2,959.20 KM", "394.80 KM"],
  ["Jadranka", " Peštalić", " 87D865", " Čitluk", "7898", "6976", "14874", "3,554.10 KM", "4,185.60 KM"],
  ["Jasmina", " Đonlić", "546D546", " Doboj", "9889", "6436", "16325", "4,450.05 KM", "3,861.60 KM"],
  ["Đorde", " Mihajlović", " 435W45", " Laktaši", "787", "6987", "7774", "354.15 KM", "4,192.20 KM"],
  ["Krešimir", " Turković", " 37DF473", " Laktaši", "3256", "5465", "8721", "1,465.20 KM", "3,279.00 KM"],
  ["Franjo", " Žontar", " 2FG5784", " Laktaši", "4365", "4747", "9112", "1,964.25 KM", "2,848.20 KM"],
  ["Ivica", " Pustivuk", " 34FD479", " Laktaši", "4365", "6547", "10912", "1,964.25 KM", "3,928.20 KM"],
  ["Stana", " ćijepković", " 98IU00", " Laktaši", "4365", "7647", "12012", "1,964.25 KM", "4,588.20 KM"]
];

function cell(tag, text, className) {
  const el = document.createElement(tag);
  el.textContent = text;
  if (className) el.className = className;
  return el;
}

const head = document.createElement("tr");
head.append(cell("th", ""), ...letters.map(l => cell("th", l)));
document.querySelector(".grid thead").append(head);

const body = document.querySelector(".grid tbody");
rows.forEach((row, i) => {
  const n = i + 1;
  const tr = document.createElement("tr");
  if (n === 4) tr.className = "title";
  if (n >= 5 && n <= 10) tr.className = "sel" + (n === 5 ? " first" : "") + (n === 10 ? " last" : "");
  tr.append(cell("th", n));
  letters.forEach((_, c) => {
    let cls = "";
    if (n === 4 && c < 9) cls = "fill";
    else if (n > 4 && c > 3 && c < 9) cls = "num";
    else if (n < 4 && row[c]) cls = "over";
    tr.append(cell("td", row[c] || "", cls));
  });
  body.append(tr);
});
```
